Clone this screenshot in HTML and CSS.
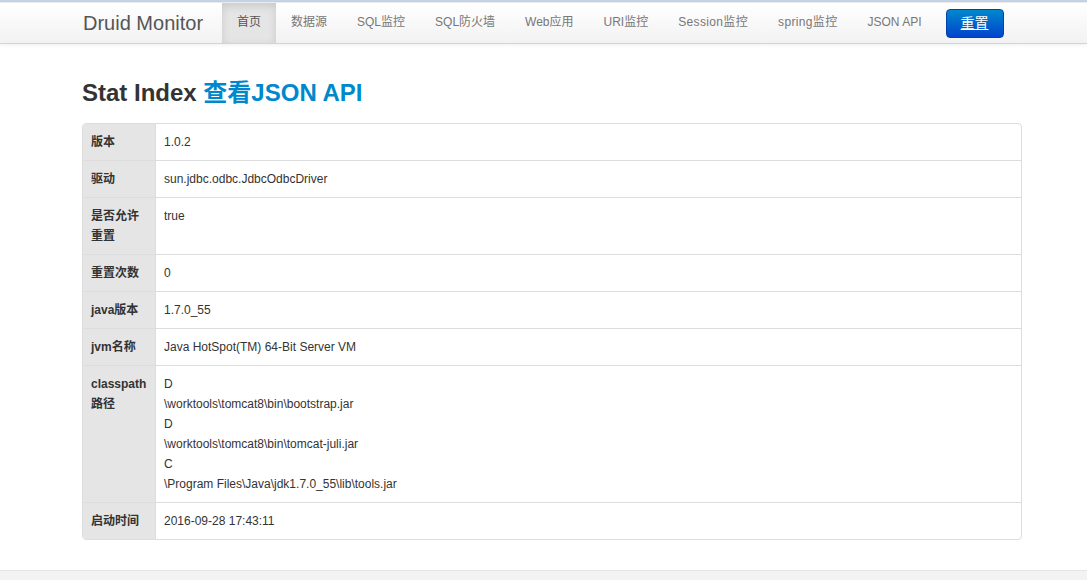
FILE: index.html
```html
<!DOCTYPE html>
<html>
<head>
<meta charset="utf-8">
<link rel="stylesheet" href="styles.css">
</head>
<body>
<div class="topline"></div>
<div class="navbar">
  <div class="container nav-inner">
    <a class="brand">Druid Monitor</a>
    <ul class="nav">
      <li class="active"><a>首页</a></li>
      <li><a>数据源</a></li>
      <li><a>SQL监控</a></li>
      <li><a>SQL防火墙</a></li>
      <li><a>Web应用</a></li>
      <li><a>URI监控</a></li>
      <li><a class="wide">Session监控</a></li>
      <li><a class="wide">spring监控</a></li>
      <li><a>JSON API</a></li>
    </ul>
    <a class="btn-reset">重置</a>
  </div>
</div>
<div class="container main">
  <h3 class="title">Stat Index <a class="link">查看JSON API</a></h3>
  <table class="stat">
    <tr><th>版本</th><td>1.0.2</td></tr>
    <tr><th>驱动</th><td>sun.jdbc.odbc.JdbcOdbcDriver</td></tr>
    <tr><th>是否允许重置</th><td>true</td></tr>
    <tr><th>重置次数</th><td>0</td></tr>
    <tr><th>java版本</th><td>1.7.0_55</td></tr>
    <tr><th>jvm名称</th><td>Java HotSpot(TM) 64-Bit Server VM</td></tr>
    <tr><th>classpath路径</th><td>D<br>\worktools\tomcat8\bin\bootstrap.jar<br>D<br>\worktools\tomcat8\bin\tomcat-juli.jar<br>C<br>\Program Files\Java\jdk1.7.0_55\lib\tools.jar</td></tr>
    <tr><th>启动时间</th><td>2016-09-28 17:43:11</td></tr>
  </table>
</div>
<div class="footer"></div>
</body>
</html>
```
FILE: styles.css
```css
html, body {
  margin: 0;
  padding: 0;
  background: #fff;
  font-family: "Liberation Sans", Arial, "Noto Sans CJK SC", sans-serif;
  font-size: 12px;
  color: #333;
  height: 580px;
  overflow: hidden;
}
.topline {
  height: 2px;
  background: #c6d4ea;
}
.navbar {
  height: 40px;
  background: linear-gradient(to bottom, #ffffff, #f2f2f2);
  border-top: 1px solid #ececec;
  border-bottom: 1px solid #d4d4d4;
  box-shadow: 0 1px 4px rgba(0,0,0,0.065);
}
.container {
  width: 940px;
  margin-left: 82px;
}
.nav-inner {
  display: flex;
  align-items: center;
  height: 40px;
  white-space: nowrap;
}
.brand {
  flex-shrink: 0;
  font-size: 20px;
  color: #555;
  padding-left: 1px;
  width: 139px;
  line-height: 40px;
}
.nav {
  display: flex;
  flex-shrink: 0;
  list-style: none;
  margin: 0;
  padding: 0;
  height: 40px;
}
.nav li a {
  display: block;
  height: 40px;
  line-height: 39px;
  padding: 0 15px;
  font-size: 12px;
  color: #777;
}
.nav li a.wide {
  letter-spacing: 0.35px;
}
.nav li.active a {
  background: #e5e5e5;
  box-shadow: inset 0 3px 8px rgba(0,0,0,0.125);
  color: #555;
}
.btn-reset {
  flex-shrink: 0;
  display: block;
  margin-left: 9px;
  width: 58px;
  height: 29px;
  margin-top: 1px;
  line-height: 27px;
  text-align: center;
  font-size: 14px;
  color: #fff;
  text-decoration: underline;
  background: linear-gradient(to bottom, #0088cc, #0044cc);
  border: 1px solid #0044aa;
  border-radius: 4px;
  box-sizing: border-box;
}
.main {
  padding-top: 35px;
  height: 491px;
}
.title {
  margin: 0 0 16px 0;
  font-size: 24px;
  line-height: 28px;
  font-weight: bold;
  color: #333;
}
.link {
  color: #0088cc;
}
.stat {
  width: 940px;
  border-collapse: separate;
  border-spacing: 0;
  border: 1px solid #dddddd;
  border-radius: 4px;
  overflow: hidden;
}
.stat th, .stat td {
  padding: 8px;
  line-height: 20px;
  text-align: left;
  vertical-align: top;
  border-top: 1px solid #dddddd;
  font-size: 12px;
}
.stat tr:first-child th, .stat tr:first-child td {
  border-top: 0;
}
.stat th {
  width: 56px;
  background: #e5e5e5;
  font-weight: bold;
}
.stat td {
  border-left: 1px solid #dddddd;
}
.footer {
  height: 10px;
  background: #f3f3f3;
  border-top: 1px solid #e5e5e5;
}
```
